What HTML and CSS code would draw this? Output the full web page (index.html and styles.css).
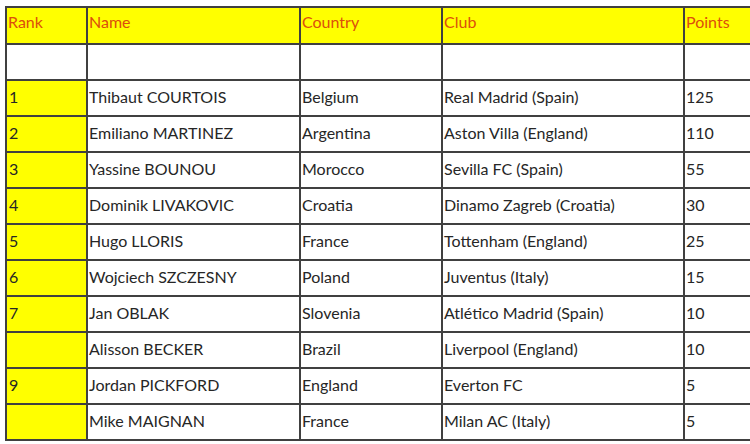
FILE: index.html
```html
<!DOCTYPE html>
<html>
<head>
<meta charset="utf-8">
<link rel="stylesheet" href="styles.css">
</head>
<body>
<div class="wrap">
<table class="rank-table">
  <colgroup>
    <col class="c-rank"><col class="c-name"><col class="c-country"><col class="c-club"><col class="c-points">
  </colgroup>
  <tr class="head"><td>Rank</td><td>Name</td><td>Country</td><td>Club</td><td>Points</td></tr>
  <tr class="blank"><td></td><td></td><td></td><td></td><td></td></tr>
  <tr><td class="rk">1</td><td>Thibaut COURTOIS</td><td>Belgium</td><td>Real Madrid (Spain)</td><td>125</td></tr>
  <tr><td class="rk">2</td><td>Emiliano MARTINEZ</td><td>Argentina</td><td>Aston Villa (England)</td><td>110</td></tr>
  <tr><td class="rk">3</td><td>Yassine BOUNOU</td><td>Morocco</td><td>Sevilla FC (Spain)</td><td>55</td></tr>
  <tr><td class="rk">4</td><td>Dominik LIVAKOVIC</td><td>Croatia</td><td>Dinamo Zagreb (Croatia)</td><td>30</td></tr>
  <tr><td class="rk">5</td><td>Hugo LLORIS</td><td>France</td><td>Tottenham (England)</td><td>25</td></tr>
  <tr><td class="rk">6</td><td>Wojciech SZCZESNY</td><td>Poland</td><td>Juventus (Italy)</td><td>15</td></tr>
  <tr><td class="rk">7</td><td>Jan OBLAK</td><td>Slovenia</td><td>Atlético Madrid (Spain)</td><td>10</td></tr>
  <tr><td class="rk"></td><td>Alisson BECKER</td><td>Brazil</td><td>Liverpool (England)</td><td>10</td></tr>
  <tr><td class="rk">9</td><td>Jordan PICKFORD</td><td>England</td><td>Everton FC</td><td>5</td></tr>
  <tr><td class="rk"></td><td>Mike MAIGNAN</td><td>France</td><td>Milan AC (Italy)</td><td>5</td></tr>
</table>
</div>
</body>
</html>
```
FILE: styles.css
```css
html, body {
  margin: 0;
  padding: 0;
  background: #ffffff;
  overflow: hidden;
}
.wrap {
  padding: 6px 0 0 5px;
  width: 745px;
  overflow: hidden;
}
.rank-table {
  border-collapse: collapse;
  table-layout: fixed;
  width: 820px;
  font-family: "Lato", "Open Sans", sans-serif;
  font-size: 16px;
  color: #262626;
}
.c-rank { width: 81px; }
.c-name { width: 213px; }
.c-country { width: 142px; }
.c-club { width: 242px; }
.c-points { width: 142px; }
.rank-table td {
  border: 2px solid #404040;
  padding: 0 0 4px 1px;
  height: 30px;
  vertical-align: middle;
  white-space: nowrap;
  overflow: hidden;
}
.rank-table tr.head td {
  background: #ffff00;
  color: #dc4e0c;
  height: 31px;
  vertical-align: top;
  padding: 4px 0 0 1px;
}
.rank-table td.rk {
  background: #ffff00;
  padding-left: 2px;
}
```
